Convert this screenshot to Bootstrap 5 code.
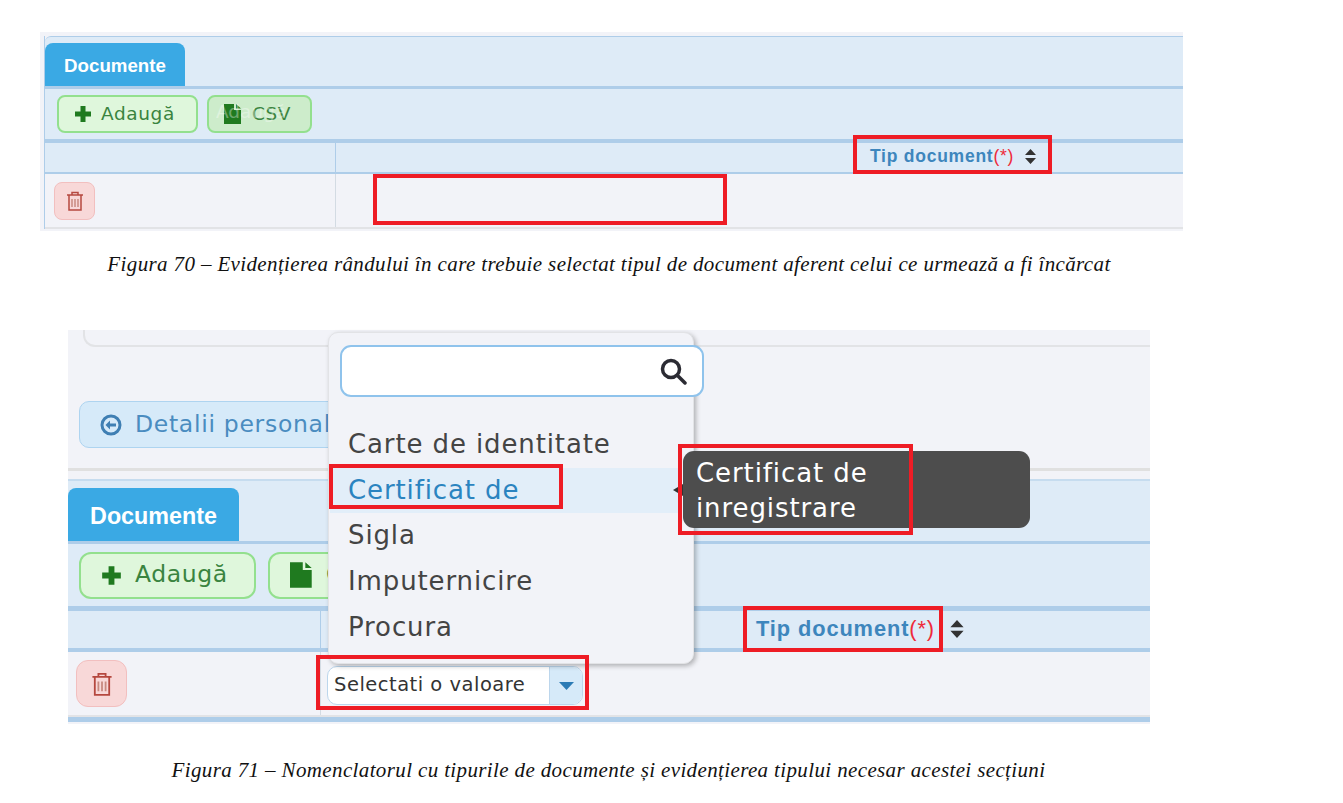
<!DOCTYPE html>
<html lang="ro">

<head>
    <meta charset="UTF-8" />
    <meta name="viewport" content="width=device-width, initial-scale=1" />
    <title>Documente</title>

    <link href="https://cdn.jsdelivr.net/npm/bootstrap@5.3.0/dist/css/bootstrap.min.css" rel="stylesheet" />

    <style>
        html,
        body {
            height: 803px;
            overflow: hidden;
        }

        body {
            background: #fff;
            font-family: "DejaVu Sans", sans-serif;
            padding-top: 32px;
        }

        svg {
            display: block;
            flex: none;
        }

        .shot {
            position: relative;
            background: #f2f3f8;
        }

        .shot-one {
            margin-left: 40px;
            width: 1143px;
            height: 199px;
            padding-top: 4px;
        }

        .shot-two {
            margin-left: 68px;
            width: 1082px;
            height: 394px;
        }

        .caption-line {
            font-family: "Liberation Serif", serif;
            font-style: italic;
            color: #111;
            text-align: center;
            margin: 0;
            font-size: 21px;
            letter-spacing: .37px;
            white-space: nowrap;
        }

        .caption-one {
            width: 1218px;
            height: 99px;
            padding-top: 18px;
        }

        .caption-two {
            width: 1217px;
            padding-top: 31px;
        }

        /* primul ecran */
        .one-body {
            margin-left: 4px;
            border-left: 1px solid #aecde9;
        }

        .tab-strip {
            background: #deebf7;
            border-top: 1px solid #aecde9;
            border-bottom: 3px solid #aecde9;
            display: flex;
            align-items: flex-end;
        }

        .one-body .tab-strip {
            height: 53px;
            border-top-left-radius: 6px;
        }

        .doc-tab {
            background: #3aa9e4;
            color: #fff;
            font-family: "Liberation Sans", sans-serif;
            font-weight: 700;
            display: flex;
            align-items: center;
            justify-content: center;
            border-radius: 8px 8px 0 0;
        }

        .one-body .doc-tab {
            width: 140px;
            height: 43px;
            font-size: 18.7px;
            padding-top: 3px;
        }

        .tool-row {
            background: #deebf7;
            display: flex;
            align-items: center;
        }

        .one-body .tool-row {
            height: 50px;
            gap: 9px;
            padding-left: 12px;
        }

        .head-row {
            background: #deebf7;
            display: flex;
        }

        .one-body .head-row {
            height: 35px;
            border-top: 4px solid #aecde9;
            border-bottom: 2px solid #aecde9;
        }

        .data-row {
            display: flex;
            background: #f2f3f8;
        }

        .one-body .data-row {
            height: 55px;
            border-bottom: 2px solid #e2e3e6;
        }

        .first-cell {
            display: flex;
            align-items: center;
            border-right: 1px solid #d3dbe3;
        }

        .one-body .first-cell {
            width: 291px;
            padding-left: 9px;
        }

        .one-body .head-row .first-cell {
            border-right-color: #aecde9;
        }

        .green-btn {
            background: #dff7dc;
            border: 2px solid #93e08e;
            color: #3a8440;
            display: flex;
            align-items: center;
            letter-spacing: .6px;
        }

        .one-body .green-btn {
            height: 38px;
            border-radius: 8px;
            font-size: 18.5px;
            padding: 0 15px;
            gap: 9px;
        }

        .one-body .add-btn {
            width: 141px;
        }

        .one-body .csv-btn {
            width: 105px;
            background: #cdeccb;
            gap: 10px;
            padding-left: 15px;
        }

        .ghost-tip {
            position: absolute;
            color: #fff;
            opacity: .35;
            font-size: 18.5px;
            left: 176px;
            top: 66px;
            z-index: 1;
        }

        .del-btn {
            background: #f8d8d8;
            border: 1px solid #f2bfbf;
            display: flex;
            align-items: center;
            justify-content: center;
        }

        .one-body .del-btn {
            width: 41px;
            height: 38px;
            border-radius: 8px;
        }

        .tip-head {
            position: absolute;
            display: flex;
            align-items: center;
            color: #3d86bd;
            font-family: "Liberation Sans", sans-serif;
            font-weight: 700;
            white-space: nowrap;
        }

        .tip-head i {
            color: #ee2a3a;
            font-style: normal;
            font-weight: 400;
        }

        .tip-one {
            left: 830px;
            top: 111px;
            font-size: 17.5px;
            letter-spacing: .75px;
            gap: 11px;
        }

        .red-box {
            position: absolute;
            border: 4px solid #ee1c25;
            pointer-events: none;
            z-index: 5;
        }

        /* al doilea ecran */
        .top-zone {
            height: 141px;
            border-bottom: 3px solid #e0e0e0;
            position: relative;
        }

        .old-card {
            position: absolute;
            left: 15px;
            top: 0;
            width: 1067px;
            height: 17px;
            border: 2px solid #e2e3e6;
            border-top: 0;
            border-right: 0;
            border-bottom-left-radius: 12px;
        }

        .back-btn {
            position: absolute;
            left: 11px;
            top: 71px;
            width: 270px;
            height: 47px;
            background: #d6eaf9;
            border: 1px solid #aed4f0;
            border-radius: 10px;
            color: #4a8cc0;
            font-size: 23.5px;
            letter-spacing: .7px;
            display: flex;
            align-items: center;
            gap: 13px;
            padding-left: 20px;
            white-space: nowrap;
            overflow: hidden;
        }

        .two-body {
            margin-top: 8px;
        }

        .two-body .tab-strip {
            height: 65px;
            border-top: 2px solid #c6dcef;
            border-bottom: 3px solid #aecde9;
        }

        .two-body .doc-tab {
            width: 171px;
            height: 53px;
            font-size: 23.3px;
            padding-top: 4px;
        }

        .two-body .tool-row {
            height: 62px;
            gap: 12px;
            padding-left: 11px;
        }

        .two-body .green-btn {
            height: 47px;
            border-radius: 12px;
            font-size: 23.5px;
            padding: 0 20px;
            gap: 13px;
        }

        .two-body .add-btn {
            width: 177px;
        }

        .two-body .csv-btn {
            width: 120px;
            overflow: hidden;
            white-space: nowrap;
        }

        .two-body .head-row {
            height: 46px;
            border-top: 5px solid #aecde9;
            border-bottom: 4px solid #aecde9;
        }

        .two-body .first-cell {
            width: 253px;
            padding-left: 8px;
        }

        .two-body .head-row .first-cell {
            border-right-color: #aecde9;
        }

        .two-body .data-row {
            height: 65px;
            border-bottom: 2px solid #e2e3e6;
        }

        .two-body .del-btn {
            width: 51px;
            height: 47px;
            border-radius: 12px;
        }

        .end-line {
            height: 5px;
            background: #aecde9;
        }

        .tip-two {
            left: 688px;
            top: 283px;
            font-size: 21.8px;
            letter-spacing: .9px;
            gap: 15px;
        }

        .value-select {
            display: flex;
            align-items: stretch;
            margin-left: 6px;
            margin-top: 4px;
            width: 256px;
            height: 39px;
            background: #fff;
            border: 1px solid #bcd6ec;
            border-radius: 10px;
            font-size: 19.5px;
            letter-spacing: .5px;
            color: #333;
            overflow: hidden;
        }

        .value-select span {
            flex: 1;
            padding-left: 6px;
            line-height: 36px;
            white-space: nowrap;
        }

        .value-select b {
            width: 33px;
            background: #d6eaf9;
            border-left: 1px solid #bcd6ec;
            display: flex;
            align-items: center;
            justify-content: center;
        }

        .pick-menu {
            position: absolute;
            left: 260px;
            top: 2px;
            width: 366px;
            height: 332px;
            background: #f2f3f8;
            border-radius: 10px;
            border: 1px solid #e2e3e6;
            box-shadow: 2px 2px 5px rgba(0, 0, 0, .28);
            z-index: 3;
            padding-top: 12px;
        }

        .pick-search {
            margin-left: 11px;
            width: 364px;
            height: 52px;
            background: #fff;
            border: 2px solid #8fc3ec;
            border-radius: 11px;
            display: flex;
            align-items: center;
            justify-content: flex-end;
            padding-right: 15px;
        }

        .pick-list {
            margin: 25px 0 0;
            padding: 0;
            list-style: none;
            font-size: 26px;
            letter-spacing: .88px;
            color: #444;
        }

        .pick-list li {
            height: 45.7px;
            line-height: 45px;
            padding-left: 19px;
            white-space: nowrap;
        }

        .pick-list .on {
            background: #e2eef9;
            color: #2b84c0;
            width: 351px;
            margin-left: 1px;
            padding-left: 18px;
        }

        .tip-dark {
            position: absolute;
            left: 615px;
            top: 121px;
            width: 347px;
            height: 77px;
            background: #4d4d4d;
            border-radius: 11px;
            color: #fff;
            font-size: 26px;
            letter-spacing: .9px;
            line-height: 35px;
            padding: 5px 13px;
            z-index: 4;
        }

        .tip-dark::before {
            content: "";
            position: absolute;
            left: -10px;
            top: 33px;
            border: 6px solid transparent;
            border-left: 0;
            border-right: 10px solid #333;
        }
    </style>
</head>

<body>

    <!-- Figura 70 -->
    <div class="shot shot-one">
        <div class="one-body">
            <div class="tab-strip">
                <div class="doc-tab">Documente</div>
            </div>
            <div class="tool-row">
                <div class="green-btn add-btn">
                    <svg width="18" height="18" viewBox="0 0 18 18"><path fill="#1f7a1f" d="M6.500 1h5v5.500H17v5h-5.500V17h-5v-5.500H1v-5h5.500z" /></svg>
                    Adaugă
                </div>
                <div class="green-btn csv-btn">
                    <svg width="18" height="20" viewBox="0 0 18 20"><path fill="#1f7a1f" d="M0 0h10v6h7v14H0zM12 0l5 4.500h-5z" /></svg>
                    CSV
                </div>
            </div>
            <div class="head-row">
                <div class="first-cell"></div>
            </div>
            <div class="data-row">
                <div class="first-cell">
                    <div class="del-btn">
                        <svg width="16" height="20" viewBox="0 0 16 20" fill="none" stroke="#b5483f" stroke-width="1.500"><path d="M0 4h16M5 4V1.500h6V4M2 4.500V19h12V4.500" /><path d="M5 8v8M8 8v8M11 8v8" stroke="#c78a80" /></svg>
                    </div>
                </div>
            </div>
        </div>
        <span class="ghost-tip">Adaugă</span>
        <div class="tip-head tip-one">
            <span>Tip document<i>(*)</i></span>
            <svg width="11" height="15" viewBox="0 0 11 15"><path fill="#333" d="M5.500 0L11 6H0zM0 9h11l-5.500 6z" /></svg>
        </div>
        <div class="red-box" style="left:813px;top:103px;width:199px;height:39px"></div>
        <div class="red-box" style="left:333px;top:142px;width:354px;height:51px"></div>
    </div>

    <p class="caption-line caption-one">Figura 70 – Evidențierea rândului în care trebuie selectat tipul de document aferent celui ce urmează a fi încărcat</p>

    <!-- Figura 71 -->
    <div class="shot shot-two">
        <div class="top-zone">
            <div class="old-card"></div>
            <div class="back-btn">
                <svg width="22" height="22" viewBox="0 0 22 22" fill="none" stroke="#3f7fb3" stroke-width="3"><circle cx="11" cy="11" r="9" /><path d="M16 11H9" /><path d="M10 6.500L5.500 11l4.500 4.500z" fill="#3f7fb3" stroke="none" /></svg>
                Detalii personale
            </div>
        </div>
        <div class="two-body">
            <div class="tab-strip">
                <div class="doc-tab">Documente</div>
            </div>
            <div class="tool-row">
                <div class="green-btn add-btn">
                    <svg width="21" height="21" viewBox="0 0 18 18"><path fill="#1f7a1f" d="M6.500 1h5v5.500H17v5h-5.500V17h-5v-5.500H1v-5h5.500z" /></svg>
                    Adaugă
                </div>
                <div class="green-btn csv-btn">
                    <svg width="23" height="26" viewBox="0 0 18 20"><path fill="#1f7a1f" d="M0 0h10v6h7v14H0zM12 0l5 4.500h-5z" /></svg>
                    CSV
                </div>
            </div>
            <div class="head-row">
                <div class="first-cell"></div>
            </div>
            <div class="data-row">
                <div class="first-cell">
                    <div class="del-btn">
                        <svg width="20" height="24" viewBox="0 0 16 20" fill="none" stroke="#b5483f" stroke-width="1.500"><path d="M0 4h16M5 4V1.500h6V4M2 4.500V19h12V4.500" /><path d="M5 8v8M8 8v8M11 8v8" stroke="#c78a80" /></svg>
                    </div>
                </div>
                <div class="d-flex align-items-center">
                    <div class="value-select">
                        <span>Selectati o valoare</span>
                        <b><svg width="15" height="8" viewBox="0 0 15 8"><path fill="#2b7bb5" d="M0 0h15L7.500 8z" /></svg></b>
                    </div>
                </div>
            </div>
            <div class="end-line"></div>
        </div>

        <div class="tip-head tip-two">
            <span>Tip document<i>(*)</i></span>
            <svg width="14" height="18" viewBox="0 0 11 15"><path fill="#333" d="M5.500 0L11 6H0zM0 9h11l-5.500 6z" /></svg>
        </div>

        <div class="pick-menu">
            <div class="pick-search">
                <svg width="28" height="28" viewBox="0 0 28 28" fill="none" stroke="#2b2b33" stroke-width="3.500"><circle cx="12" cy="12" r="8.500" /><path d="M18.500 18.500L26 26" stroke-linecap="round" /></svg>
            </div>
            <ul class="pick-list">
                <li>Carte de identitate</li>
                <li class="on">Certificat de</li>
                <li>Sigla</li>
                <li>Imputernicire</li>
                <li>Procura</li>
            </ul>
        </div>

        <div class="tip-dark">Certificat de<br />inregistrare</div>

        <div class="red-box" style="left:261px;top:134px;width:234px;height:45px"></div>
        <div class="red-box" style="left:610px;top:114px;width:235px;height:91px"></div>
        <div class="red-box" style="left:675px;top:276px;width:200px;height:46px"></div>
        <div class="red-box" style="left:248px;top:325px;width:273px;height:55px"></div>
    </div>

    <p class="caption-line caption-two">Figura 71 – Nomenclatorul cu tipurile de documente și evidențierea tipului necesar acestei secțiuni</p>

    <script src="https://cdn.jsdelivr.net/npm/bootstrap@5.3.0/dist/js/bootstrap.bundle.min.js"></script>

</body>

</html>
